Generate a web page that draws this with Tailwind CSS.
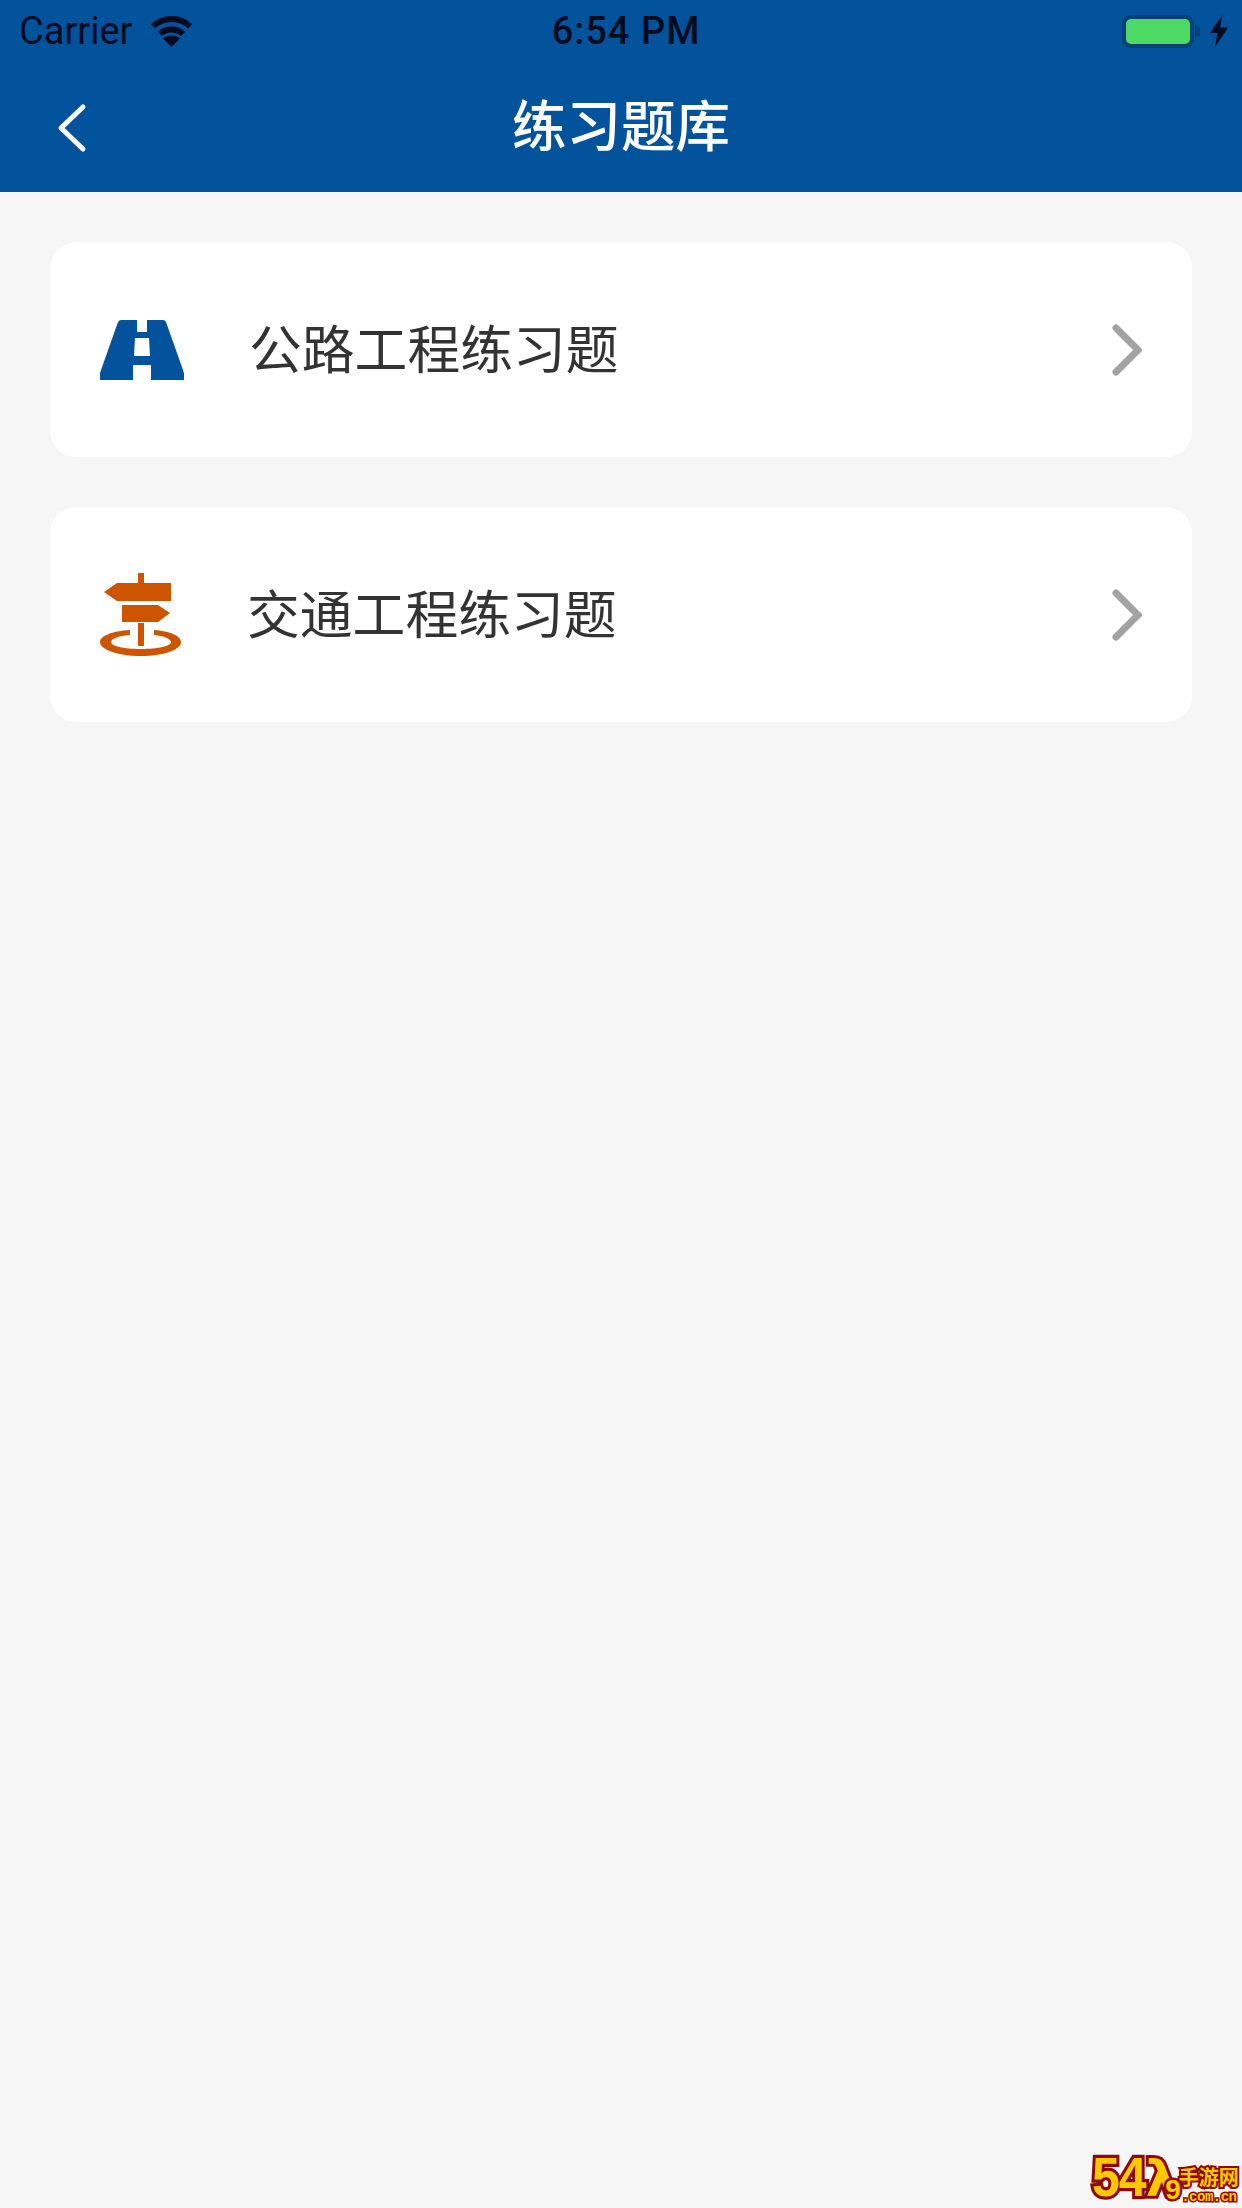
<!DOCTYPE html>
<html lang="zh">
<head>
<meta charset="utf-8">
<script src="https://cdn.jsdelivr.net/npm/@tailwindcss/browser@4"></script>
</head>
<body class="m-0">
<div class="relative w-[1242px] h-[2208px] overflow-hidden bg-[#f6f6f6] font-['Inter','Noto_Sans_CJK_SC',sans-serif]">
  <header class="h-[192px] bg-[#02529c]">
    <div class="h-[62px] grid grid-cols-3 items-center text-[#030b1e]">
      <div class="flex items-center pl-[19px] gap-[19px]">
        <span class="text-[38px] leading-[62px] font-['Roboto',sans-serif]">Carrier</span>
        <svg class="w-[41px] h-[31px]" viewBox="0 0 41 31" fill="none" stroke="#030b1e" stroke-width="6">
          <path d="M2 10.500 C12 0.500 29 0.500 39 10.500"/>
          <path d="M9 18 C15 12 26 12 32 18"/>
          <path d="M20.500 31 L12 22.500 C16.500 18.500 24.500 18.500 29 22.500 Z" fill="#030b1e" stroke="none"/>
        </svg>
      </div>
      <div class="text-center text-[38px] leading-[62px] font-medium font-['Roboto',sans-serif] tracking-[1px] pl-[10px]">6:54 PM</div>
      <div class="flex items-center justify-end pr-[14px]">
        <div class="w-[72px] h-[33px] rounded-[9px] border-[4px] border-[#0a3f7d] bg-[#4cd964]"></div>
        <div class="w-[5px] h-[12px] ml-[1px] rounded-r-[4px] bg-[#0a3f7d]"></div>
        <svg class="w-[18px] h-[32px] ml-[10px]" viewBox="0 0 18 32"><path d="M12.500 0 L0 18 H7.500 L5 32 L18 12.500 H10 Z" fill="#030b1e"/></svg>
      </div>
    </div>
    <div class="relative h-[130px] flex items-center justify-center">
      <svg class="absolute left-[57px] top-[41px] w-[30px] h-[50px]" viewBox="0 0 30 50" fill="none" stroke="#fff" stroke-width="5" stroke-linecap="round" stroke-linejoin="round"><path d="M26 4 L4 25 L26 46"/></svg>
      <h1 class="text-[54.500px] leading-[60px] font-medium text-white mt-[-2px]">练习题库</h1>
    </div>
  </header>

  <main class="px-[50px] pt-[50px] flex flex-col gap-[50px]">
    <a class="h-[215px] rounded-[26px] bg-white flex items-center">
      <svg class="ml-[50px] w-[84px] h-[60px] shrink-0" viewBox="0 0 84 60">
        <path d="M21 0 H63 Q65 0 66 2 L83 50 Q84 52 84 56 V60 H0 V56 Q0 52 1 50 L18 2 Q19 0 21 0 Z" fill="#02529c"/>
        <path d="M37 0 H47 V12 H37 Z M35 18 H49 L50 36 H34 Z M33 45 H51 L51 60 H33 Z" fill="#fff"/>
      </svg>
      <span class="ml-[65px] text-[52.800px] leading-[60px] text-[#333] whitespace-nowrap">公路工程练习题</span>
      <svg class="ml-auto mr-[50px] w-[30px] h-[52px]" viewBox="0 0 30 52" fill="none" stroke="#a3a3a3" stroke-width="7" stroke-linecap="round" stroke-linejoin="miter"><path d="M4 4 L26 26 L4 48"/></svg>
    </a>
    <a class="h-[215px] rounded-[26px] bg-white flex items-center">
      <svg class="ml-[50px] w-[84px] h-[84px] shrink-0" viewBox="0 0 84 84">
        <path d="M38 0 H44 V10 H38 Z M38 50 H44 V73 H38 Z" fill="#ce5500"/>
        <path d="M4 19 L17 10 H71 V28 H17 Z M22 32 H58 L70 40 L58 49 H22 Z" fill="#ce5500"/>
        <path d="M30 57 L30 62 C18 63 11 66 11 69 C11 73 24 76 41 76 C58 76 71 73 71 69 C71 66 64 63 54 62 L54 57 C70 58 81 63 81 69 C81 77 63 83 41 83 C19 83 0 77 0 69 C0 63 12 58 30 57 Z" fill="#ce5500"/>
      </svg>
      <span class="ml-[63px] text-[52.800px] leading-[60px] text-[#333] whitespace-nowrap">交通工程练习题</span>
      <svg class="ml-auto mr-[50px] w-[30px] h-[52px]" viewBox="0 0 30 52" fill="none" stroke="#a3a3a3" stroke-width="7" stroke-linecap="round" stroke-linejoin="miter"><path d="M4 4 L26 26 L4 48"/></svg>
    </a>
  </main>

  <div class="absolute right-0 bottom-0 w-[150px] flex items-end">
    <span class="text-[50px] leading-[56px] font-bold text-[#ffc800] [-webkit-text-stroke:6px_#8c0a0a] [paint-order:stroke_fill] font-['Liberation_Sans',sans-serif] tracking-[-1px] origin-bottom scale-y-110">54</span>
    <span class="text-[50px] leading-[58px] font-bold text-[#ffc800] [-webkit-text-stroke:6px_#8c0a0a] [paint-order:stroke_fill] font-['DejaVu_Sans',sans-serif] tracking-[-12px]">λ</span>
    <span class="text-[28px] leading-[32px] font-bold text-[#ffc800] [-webkit-text-stroke:5px_#8c0a0a] [paint-order:stroke_fill] font-['Liberation_Sans',sans-serif] mr-[-2px] mb-[2px]">9</span>
    <div class="flex flex-col items-center shrink-0 mb-[3px]">
      <span class="text-[20px] leading-[24px] font-bold text-[#ffc800] [-webkit-text-stroke:4px_#8c0a0a] [paint-order:stroke_fill] font-['Noto_Sans_CJK_SC',sans-serif] whitespace-nowrap">手游网</span>
      <span class="text-[14px] leading-[16px] font-bold text-[#ffc800] [-webkit-text-stroke:3px_#8c0a0a] [paint-order:stroke_fill] font-['Liberation_Mono',monospace] whitespace-nowrap tracking-[-0.5px]">.com.cn</span>
    </div>
  </div>
</div>
</body>
</html>
